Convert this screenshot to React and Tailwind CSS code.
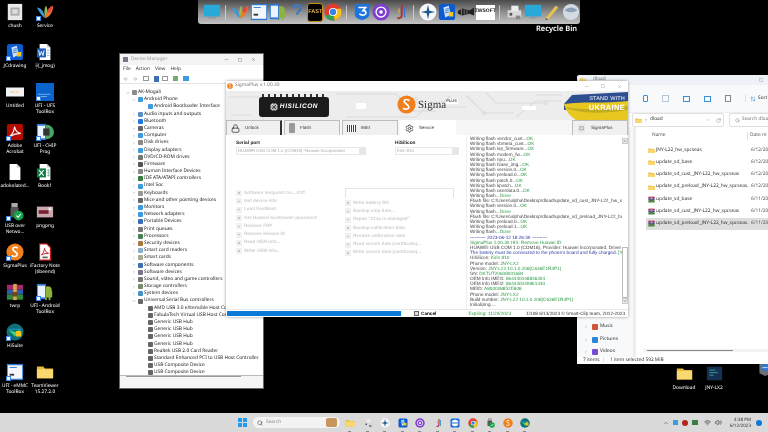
import React from "react";
import { ChevronRight, ChevronDown, ChevronUp, Search, RotateCw, ArrowUpDown, Wifi, Volume2, Minus, Square, X, Settings, Lock, Cpu, ArrowLeft, ArrowRight } from "lucide-react";

// --- small drawings, all on a 20x20 box ---
const Svg = ({ size = 18, children }) => (
  <svg width={size} height={size} viewBox="0 0 20 20" className="block shrink-0">{children}</svg>
);

const Page = ({ fill = "#fff" }) => <path d="M4 1h8l4 4v14H4z" fill={fill} />;

const icons = {
  chush: <><rect x="2" y="1" width="16" height="18" fill="#e8e8e4" /><rect x="5" y="5" width="10" height="9" fill="#aaa" /><rect x="7" y="7" width="6" height="5" fill="#ddd" /></>,
  msn: <><path d="M10 17C6 14 3 9 1 5c4 0 8 4 9 12z" fill="#3a9ad9" /><path d="M10 17C9 11 9 6 11 3c2 2 2 8-1 14z" fill="#8cc152" /><path d="M10 17c1-6 4-11 9-14 0 6-3 12-9 14z" fill="#f2752b" /><path d="M12 9c2-3 4-5 6-6 1 3-1 6-3 8z" fill="#e8483b" /></>,
  jcd: <><rect x="1" y="1" width="18" height="18" rx="3" fill="#0b5bd3" /><path d="M6 5l6-2 2 10-6 3z" fill="#cfe3fb" /><path d="M8 7l4-1M8 9l4-1M8 11l4-1" stroke="#0b5bd3" strokeWidth=".8" /><rect x="12" y="10" width="5" height="5" fill="#f5c518" /></>,
  word: <><Page /><path d="M12 1l4 4h-4z" fill="#ccc" /><rect x="1" y="6" width="10" height="10" fill="#1c5db5" /><path d="M3 8l1.2 6L6 9.5 7.8 14 9 8" stroke="#fff" strokeWidth="1" fill="none" /><path d="M12 8h3M12 11h3M12 14h3" stroke="#8fb0dd" strokeWidth="1" /></>,
  untitled: <><rect x="0" y="5" width="20" height="10" fill="#f3f3f3" /><path d="M7 10h1M9 10h1M11 10h1M13 10h1" stroke="#e0a030" strokeWidth="1" /><path d="M5 10h1" stroke="#4a90d9" strokeWidth="1" /></>,
  ufs: <><rect x="0" y="0" width="20" height="20" fill="#0b63ce" /><rect x="2" y="12" width="14" height="1" fill="#7fb1ea" /><rect x="2" y="14.5" width="10" height="1" fill="#7fb1ea" /></>,
  acrobat: <><rect x="1" y="1" width="18" height="18" rx="2" fill="#b30b00" /><path d="M4 15c3-2 5-6 5.500-11 1 5 3 7 7 7.500-4 0-8 1-12.500 3.500z" stroke="#fff" strokeWidth="1.200" fill="none" /></>,
  chip: <><circle cx="12" cy="10" r="8" fill="#4aa564" /><rect x="1" y="1" width="10" height="18" fill="#2f79d4" /><rect x="2" y="3" width="8" height="14" fill="#eaf2fb" /><rect x="8" y="6" width="7" height="8" fill="#333" /></>,
  blank: <><Page /><path d="M12 1l4 4h-4z" fill="#ccc" /></>,
  excel: <><Page /><path d="M12 1l4 4h-4z" fill="#ccc" /><rect x="1" y="6" width="10" height="10" fill="#107c41" /><path d="M3.500 8l5 6M8.500 8l-5 6" stroke="#fff" strokeWidth="1.200" /><path d="M12 8h3.500M12 11h3.500M12 14h3.500M14 7v8" stroke="#6fb58f" strokeWidth=".8" /></>,
  usb: <><rect x="6" y="0" width="7" height="5" fill="#aaa" /><rect x="5" y="5" width="9" height="11" fill="#555" /><circle cx="14" cy="14" r="5.500" fill="#15a34a" /><path d="M11.500 14l2 2 3-4" stroke="#fff" strokeWidth="1.200" fill="none" /></>,
  picture: <><rect x="1" y="4" width="18" height="12" fill="#c9a8ae" /><rect x="3" y="8" width="11" height="4" fill="#7a1f35" /><rect x="14" y="5" width="3" height="3" fill="#eee" /></>,
  sigma: <><circle cx="10" cy="10" r="9.500" fill="#f07f1e" /><path d="M13 6c-1-1.500-5-2-5.500.5C7 9 13 10 12.500 13c-.5 2.500-5 2.500-6 .5" stroke="#fff" strokeWidth="1.800" fill="none" /></>,
  pdf: <><path d="M4 1h8l4 4v14H4z" fill="#fff" stroke="#c4161c" strokeWidth="1.200" /><path d="M6 13c2-1 3-4 3.500-7 .5 3 2 5 4.500 5.500-3 0-5 .5-8 1.500z" stroke="#c4161c" fill="none" /><rect x="7" y="15" width="6" height="2" fill="#666" /></>,
  rar: <><rect x="1" y="2" width="18" height="5.500" fill="#a6296d" /><rect x="1" y="7.500" width="18" height="5.500" fill="#2f5aa8" /><rect x="1" y="13" width="18" height="5.500" fill="#2d8a3e" /><rect x="8" y="1" width="4" height="18" fill="#d8a545" /><rect x="7" y="10" width="6" height="5" fill="#6b4a1c" /></>,
  android: <><circle cx="13" cy="8" r="4.500" fill="#8db33a" /><rect x="8" y="9" width="10" height="7" rx="1" fill="#8db33a" /><rect x="10" y="15" width="2" height="4" fill="#8db33a" /><rect x="14" y="15" width="2" height="4" fill="#8db33a" /><rect x="1" y="1" width="10" height="17" fill="#2f79d4" /><rect x="2" y="3" width="8" height="13" fill="#eaf2fb" /></>,
  hisuite: <><circle cx="10" cy="10" r="9.500" fill="#0d6f77" /><path d="M3 8l7 7 7-9-6 4z" fill="#3fd07a" /><rect x="11" y="9" width="6" height="6" fill="#f5c518" /><path d="M3 7h14" stroke="#2a9bd4" /></>,
  emmc: <><rect x="1" y="1" width="18" height="18" fill="#2f79d4" /><rect x="2" y="2.500" width="16" height="15" fill="#f3f7fc" /><rect x="4" y="12" width="5" height="2" fill="#333" /><path d="M4 5h8" stroke="#2f79d4" /></>,
  folder: <><path d="M1 4h7l2 2h9v11H1z" fill="#e8b93c" /><path d="M1 7h18v10H1z" fill="#f9d86f" /></>,
  monitor: <><rect x="1" y="2" width="18" height="13" fill="#28a9d8" /><rect x="6" y="16" width="8" height="1" fill="#889" /></>,
  chrome: <><circle cx="10" cy="10" r="9.500" fill="#e33b2e" /><path d="M10 10L1.800 14.800A9.500 9.500 0 0 0 12 19.300z" fill="#2fa44f" /><path d="M10 10l2 9.300A9.500 9.500 0 0 0 18.800 6.500H10z" fill="#f8c11c" /><circle cx="10" cy="10" r="4.500" fill="#fff" /><circle cx="10" cy="10" r="3.500" fill="#3b82e6" /></>,
  three: <><path d="M2 1h16v12c0 3-4 5-8 6-4-1-8-3-8-6z" fill="#1d74dd" /><path d="M6 5h8l-3 3.500c3 0 4 1.500 3 3.500-1 2-5 2-7 0" stroke="#fff" strokeWidth="1.800" fill="none" /></>,
  purple: <><circle cx="10" cy="10" r="9.500" fill="#7d3fd1" /><circle cx="10" cy="10" r="5.500" fill="none" stroke="#fff" strokeWidth="1.500" /><circle cx="10" cy="10" r="2" fill="#fff" /></>,
  j: <><path d="M12 2v11c0 3-2 4-5 4" stroke="#b0353a" strokeWidth="2.200" fill="none" /><path d="M15 4v12" stroke="#2f79d4" strokeWidth="1.500" /><path d="M9 6v5" stroke="#d8a545" strokeWidth="1.500" /></>,
  compass: <><circle cx="10" cy="10" r="9.500" fill="#f7f7f7" /><path d="M10 2l1.500 6.500L18 10l-6.500 1.500L10 18l-1.500-6.500L2 10l6.500-1.500z" fill="#1f5a91" /></>,
  fish: <><path d="M1 9l5-3 8 2 5-3v9l-5-2-8 2-5-2z" fill="#222" /><path d="M5 6v7M8 7v6M11 7v6" stroke="#777" /></>,
  printer: <><rect x="3" y="8" width="15" height="8" fill="#d8d8d8" /><rect x="7" y="3" width="8" height="6" fill="#ececec" /><rect x="5" y="11" width="3" height="3" fill="#555" /><rect x="12" y="14" width="5" height="4" fill="#888" /></>,
  help: <path d="M6 6c0-5 8-5 8 0 0 3-4 3-4 7" stroke="#3a7ac8" strokeWidth="2.500" fill="none" />,
  team: <><rect x="1" y="1" width="18" height="18" rx="3" fill="#1e6fd9" /><circle cx="10" cy="10" r="6.500" fill="#fff" /><path d="M3 10h14" stroke="#1e6fd9" strokeWidth="2" /></>,
  pencil: <><path d="M3 17L14 3l3 2L6 18z" fill="#e8c34a" /><path d="M3 17l3 1-3 1z" fill="#444" /></>,
  ball: <><circle cx="10" cy="10" r="9" fill="#d5dbe3" /><path d="M3 8c4-4 10-4 14 0-4 3-10 3-14 0z" fill="#8ea0b7" /></>,
  dark: <><rect x="1" y="2" width="18" height="16" fill="#16304f" /><path d="M4 6h7M4 9h10M4 12h5" stroke="#3ea6a0" /></>,
  grey: <><path d="M2 1h18v16l-10 3-8-4z" fill="#6b6f73" /><circle cx="10" cy="8" r="5" fill="#2f79d4" /><path d="M6 8h8" stroke="#fff" /></>,
};

const Ico = ({ name, size = 18 }) => <Svg size={size}>{icons[name]}</Svg>;

// desktop, read by rows: [left column, right column]
const desktop = [
  [{ icon: "chush", label: "chush" }, { icon: "msn", label: "Service", link: true }],
  [{ icon: "jcd", label: "JCdrawing", link: true }, { icon: "word", label: "ဗို(_jmog)" }],
  [{ icon: "untitled", label: "Untitled" }, { icon: "ufs", label: "UFI - UFS ToolBox", link: true }],
  [{ icon: "acrobat", label: "Adobe Acrobat", link: true }, { icon: "chip", label: "UFI - CHIP Prog", link: true }],
  [{ icon: "blank", label: "adokolated..." }, { icon: "excel", label: "Book1" }],
  [{ icon: "usb", label: "USB over Netwo...", link: true }, { icon: "picture", label: "pngpng" }],
  [{ icon: "sigma", label: "SigmaPlus", link: true }, { icon: "pdf", label: "iFactory Note (tibeend)" }],
  [{ icon: "rar", label: "twrp" }, { icon: "android", label: "UFI - Android ToolBox", link: true }],
  [{ icon: "hisuite", label: "HiSuite", link: true }, null],
  [{ icon: "emmc", label: "UFI - eMMC ToolBox", link: true }, { icon: "folder", label: "TeamViewer 15.27.2.0" }],
];

const DesktopIcon = ({ icon, label, link }) => (
  <div className="flex flex-col items-center w-[30px]">
    <div className="relative">
      <Ico name={icon} size={18} />
      {link && <span className="absolute left-0 bottom-0 w-[5px] h-[5px] bg-white border border-[#3b82e6]" />}
    </div>
    <div className="mt-[2px] text-center text-white text-[4.800px] leading-[6px] w-[30px] font-['Noto_Sans',sans-serif]">{label}</div>
  </div>
);

const DesktopIcons = () => (
  <div className="absolute left-0 top-[3px] grid grid-cols-[30px_30px] auto-rows-[40px]">
    {desktop.flat().map((item, i) => (item ? <DesktopIcon key={i} {...item} /> : <div key={i} />))}
  </div>
);

const Sep = () => <span className="w-[4px] h-[15px] mx-[3px] rounded-full border-l border-[#d8d8d8] opacity-80" />;

const Dock = () => (
  <div className="absolute left-[198px] top-0 w-[382px] h-[24px] rounded-b-[3px] bg-gradient-to-b from-[#4a4a4a] via-[#8f8f8f] to-[#c4c4c4] flex items-center gap-[1px] pl-[5px]">
    <Ico name="monitor" />
    <Sep />
    <Ico name="msn" /><Ico name="emmc" /><Ico name="android" /><Ico name="help" />
    <div className="w-[19px] h-[19px] rounded-[3px] bg-black border border-[#c68a1a] flex items-center justify-center text-[#e9b949] text-[5.500px] font-bold font-['Liberation_Sans',sans-serif]">FAST</div>
    <Ico name="chrome" />
    <Sep />
    <Ico name="three" /><Ico name="purple" /><Ico name="j" />
    <Sep />
    <Ico name="compass" /><Ico name="jcd" /><Ico name="fish" />
    <div className="w-[19px] h-[15px] bg-white text-[#222] text-[5px] font-bold flex items-center justify-center font-['Liberation_Sans',sans-serif]">ZWSOFT</div>
    <Sep />
    <Ico name="printer" /><Ico name="monitor" /><Ico name="pencil" /><Ico name="ball" />
  </div>
);

// --- Device Manager ---
const tree = [
  ["#5a8fc7", "Audio inputs and outputs"], ["#1e78e0", "Bluetooth"], ["#666", "Cameras"], ["#3d9be0", "Computer"],
  ["#888", "Disk drives"], ["#3d9be0", "Display adapters"], ["#777", "DVD/CD-ROM drives"], ["#555", "Firmware"],
  ["#888", "Human Interface Devices"], ["#3a7d44", "IDE ATA/ATAPI controllers"], ["#3d9be0", "Intel Soc"], ["#999", "Keyboards"],
  ["#666", "Mice and other pointing devices"], ["#3d9be0", "Monitors"], ["#3d9be0", "Network adapters"], ["#3b6fb5", "Portable Devices"],
  ["#777", "Print queues"], ["#4b7f52", "Processors"], ["#a9783a", "Security devices"], ["#8ab0d0", "Smart card readers"],
  ["#aa9", "Smart cards"], ["#3b6fb5", "Software components"], ["#778", "Software devices"], ["#777", "Sound, video and game controllers"],
  ["#7a8a6a", "Storage controllers"], ["#4a90c8", "System devices"],
];

const usb = [
  "AMD USB 3.0 eXtensible Host Controller", "FabulaTech Virtual USB Host Controller", "Generic USB Hub", "Generic USB Hub", "Generic USB Hub",
  "Generic USB Hub", "Realtek USB 2.0 Card Reader", "Standard Enhanced PCI to USB Host Controller", "USB Composite Device", "USB Composite Device",
];

const Row = ({ color, label, open, arrow = true, depth = 1 }) => (
  <div className={`flex items-center h-[7.200px] whitespace-nowrap ${depth === 0 ? "pl-[0px]" : depth === 1 ? "pl-[6px]" : "pl-[20px]"}`}>
    {arrow ? (open ? <ChevronDown size={4} className="text-[#555] shrink-0" /> : <ChevronRight size={4} className="text-[#777] shrink-0" />) : null}
    <span className="w-[5px] h-[5px] mx-[1.500px] shrink-0 rounded-[1px]" style={{ backgroundColor: color }} />
    <span>{label}</span>
  </div>
);

const DeviceManager = () => (
  <div className="absolute left-[119px] top-[53px] w-[145px] h-[336px] bg-white flex flex-col border border-[#666] text-[#222] text-[4.800px] font-['Noto_Sans',sans-serif] overflow-hidden">
    <div className="flex items-center h-[11px] bg-[#f3f3f3] px-[3px] gap-[3px] text-[#999] shrink-0">
      <span className="w-[5px] h-[5px] bg-[#778]" />
      <span>Device Manager</span>
      <div className="ml-auto flex items-center gap-[9px] pr-[4px] text-[#666]"><Minus size={5} /><Square size={4} /><X size={5} /></div>
    </div>
    <div className="flex gap-[5px] h-[9px] items-center px-[3px] text-[#333] shrink-0">
      <span>File</span><span>Action</span><span>View</span><span>Help</span>
    </div>
    <div className="flex gap-[3px] h-[10px] items-center px-[3px] border-b border-[#e4e4e4] shrink-0">
      <ArrowLeft size={6} className="text-[#999]" /><ArrowRight size={6} className="text-[#999]" />
      <span className="w-[6px] h-[5px] border border-[#999] ml-[2px]" />
      <span className="w-[5px] h-[6px] bg-[#3b6fb5] ml-[2px]" />
      <span className="w-[6px] h-[5px] border border-[#999]" />
      <span className="w-[5px] h-[5px] bg-[#7aa86f] ml-[2px]" />
      <span className="w-[6px] h-[5px] bg-[#3d9be0] ml-[2px]" />
    </div>
    <div className="flex-1 overflow-hidden pt-[5px] pl-[6px]">
      <Row color="#8a8a8a" label="AK-Mogali" open depth={0} />
      <Row color="#3d9be0" label="Android Phone" open />
      <Row color="#3d9be0" label="Android Bootloader Interface" arrow={false} depth={2} />
      {tree.map(([color, label], i) => <Row key={i} color={color} label={label} />)}
      <Row color="#666" label="Universal Serial Bus controllers" open />
      {usb.map((label, i) => <Row key={i} color="#666" label={label} arrow={false} depth={2} />)}
    </div>
    <div className="h-[13px] bg-[#f5f5f5] border-t border-[#bbb] shrink-0 relative">
      <div className="absolute left-[6px] top-[0px] w-[115px] h-[1px] bg-[#999]" />
    </div>
  </div>
);

// --- SigmaPlus ---
const leftActions = ["Software testpoint On..../Off", "Get device info", "Load FastBoot", "Get Huawei bootloader password", "Remove FRP", "Remove Huawei ID", "Read OEM Info...", "Write OEM Info..."];
const rightActions = ["Write battery SN", "Backup chip data...", "Repair \"Chip is damaged\"", "Backup calibration data", "Restore calibration data", "Read secure data (certificate)...", "Write secure data (certificate)..."];

const g = "#2e9a45";
const log = [
  ["Writing flash vendor_cust...", "OK"], ["Writing flash vbmeta_cust...", "OK"], ["Writing flash isp_firmware...", "OK"], ["Writing flash modem_fw...", "OK"],
  ["Writing flash npu...", "OK"], ["Writing flash hiase_img...", "OK"], ["Writing flash version.0...", "OK"], ["Writing flash preload.0...", "OK"],
  ["Writing flash patch.0...", "OK"], ["Writing flash kpatch...", "OK"], ["Writing flash userdata.0...", "OK"], ["Writing flash...", "Done"],
  ["Flash file: C:\\Users\\alpha\\Desktop\\dload\\update_sd_cust_JNY-L22_hw_spcseas"], ["Writing flash version.0...", "OK"], ["Writing flash...", "Done"],
  ["Flash file: C:\\Users\\alpha\\Desktop\\dload\\update_sd_preload_JNY-L22_hw_spc"], ["Writing flash preload.0...", "OK"], ["Writing flash preload.1...", "OK"], ["Writing flash...", "Done"],
];
const logEnd = [
  ["HiSilicon: ", "Kirin 810"], ["Phone model: ", "JNY-LX2"], ["Version: ", "JNY-L22 10.1.0.208(C636E1R4P1)"], ["SN: ", "DKTUT20608001684"],
  ["OEM Info IMEI1: ", "864440048836304"], ["OEM Info IMEI2: ", "864440049861330"], ["MEID: ", "A800008852E808"], ["Phone model: ", "JNY-LX2"],
  ["Build number: ", "JNY-L22 10.1.0.208(C636E1R4P1)"], ["Initializing ..."],
];

const LogLine = ({ text, value }) => (
  <div className="h-[5.200px] leading-[5.200px] whitespace-nowrap text-[#444]">{text}{value && <span style={{ color: g }}>{value}</span>}</div>
);

const Tab = ({ icon, label, active, dark }) => (
  <div className={`flex items-center gap-[5px] pl-[4px] h-[15px] w-[56px] border-t border-l ${dark ? "border-r-2 border-r-[#333]" : "border-r"} ${active ? "bg-white border-white" : "bg-[#f0f0f0] border-[#bdbdbd]"}`}>
    {icon}
    <span className="text-[4.500px] font-['Liberation_Sans',sans-serif] text-[#333]">{label}</span>
  </div>
);

const Action = ({ label }) => (
  <div className="flex items-center gap-[2px] h-[8.300px]">
    <span className="w-[6px] h-[6px] bg-[#f0f0f0] flex items-center justify-center shrink-0"><span className="w-[1.500px] h-[1.500px] rounded-full bg-[#bbb]" /></span>
    <span className="text-[#cfcfcf] text-[4.600px] font-bold font-['Liberation_Sans',sans-serif] whitespace-nowrap">{label}</span>
  </div>
);

const Combo = ({ label, value, width }) => (
  <div style={{ width }}>
    <div className="text-[4.800px] leading-[6px] font-bold text-[#222] font-['Liberation_Sans',sans-serif]">{label}</div>
    <div className="flex items-center justify-between h-[8px] border border-[#e8e8e8] pl-[1px] text-[4.300px] text-[#aaa] font-['Liberation_Sans',sans-serif] whitespace-nowrap overflow-hidden">
      <span>{value}</span>
      <span className="w-[6px] h-full bg-[#e6e6e6] shrink-0" />
    </div>
  </div>
);

const Banner = () => (
  <div className="relative h-[29px] bg-[#ededed] overflow-hidden shrink-0">
    <svg className="absolute inset-0" width="402" height="29" viewBox="0 0 402 29">
      <g stroke="#dcdcdc" strokeWidth="1.200" fill="none">
        <path d="M2 6h30l5 5v18M110 3h60l8 8h40l6-6M120 26h70l10-10h40M240 4l18 18h30M260 2l10 10h50M290 26l20-16h26M5 24h20M310 4h26M180 20h30" />
        <circle cx="258" cy="22" r="1.500" /><circle cx="320" cy="12" r="1.500" /><circle cx="190" cy="8" r="1.500" />
      </g>
      <g fill="#fff"><rect x="220" y="8" width="12" height="5" /><rect x="296" y="15" width="14" height="4" /><rect x="130" y="12" width="10" height="6" /></g>
    </svg>
    {/* chip logo */}
    <div className="absolute left-[33px] top-[6px] w-[70px] h-[20px] rounded-[3px] bg-[#1b1b1b] flex items-center justify-center gap-[2px]">
      <Cpu size={8} className="text-white" />
      <span className="text-white italic font-bold text-[6.500px] tracking-[0.6px] font-['Liberation_Sans',sans-serif]">HISILICON</span>
    </div>
    <div className="absolute left-[36px] top-[3px] w-[64px] h-[3px] bg-[repeating-linear-gradient(90deg,#333_0,#333_2px,transparent_2px,transparent_6px)]" />
    {/* sigma logo */}
    <div className="absolute left-[171px] top-[4px] flex items-start">
      <Ico name="sigma" size={19} />
      <span className="ml-[2px] mt-[4px] text-[#333] text-[11px] leading-[12px] font-['Liberation_Serif',serif]">Sigma</span>
      <span className="mt-[3px] text-[#555] text-[4px] font-bold font-['Liberation_Sans',sans-serif]">PLUS</span>
    </div>
    {/* flag */}
    <svg className="absolute right-0 top-[1px]" width="64" height="28" viewBox="0 0 64 28">
      <path d="M8 3L64 0v14L0 18V12z" fill="#2d4f8f" />
      <path d="M0 12c20-3 40 0 64-3v19H12c-6-4-10-8-12-16z" fill="#e8c820" />
      <path d="M0 15c15 2 30 4 64-1v4c-25 4-50 4-64-3z" fill="#a89a20" opacity=".6" />
    </svg>
    <div className="absolute right-[3px] top-[5px] text-right text-white font-['Liberation_Sans',sans-serif]">
      <div className="text-[5.500px] leading-[7px] tracking-[0.2px]">STAND WITH</div>
      <div className="text-[7.500px] leading-[9px] font-bold tracking-[0.3px]">UKRAINE</div>
    </div>
  </div>
);

const SigmaWindow = () => (
  <div className="absolute left-[226px] top-[81px] w-[402px] h-[236px] bg-white flex flex-col shadow-[0_0_3px_rgba(0,0,0,0.4)]">
    <div className="flex items-center h-[10px] px-[1px] gap-[2px] shrink-0 text-[#777] text-[4.800px] font-['Noto_Sans',sans-serif]">
      <Ico name="sigma" size={6} />
      <span>SigmaPlus v.1.00.30</span>
      <div className="ml-auto flex items-center gap-[12px] pr-[5px] text-[#999]"><Minus size={5} /><Square size={4} /><X size={5} /></div>
    </div>
    <Banner />
    <div className="flex items-end gap-[2px] h-[15px] bg-[#f6f6f6] shrink-0">
      <Tab label="Unlock" dark icon={<Lock size={9} className="text-[#333]" />} />
      <Tab label="Flash" icon={<span className="w-[6px] h-[10px] rounded-[1px] bg-[#999]" />} />
      <Tab label="IMEI" icon={<span className="w-[9px] h-[7px] bg-[repeating-linear-gradient(90deg,#444_0,#444_1px,#fff_1px,#fff_2px)]" />} />
      <Tab label="Service" active icon={<Settings size={9} className="text-[#333]" />} />
      <div className="ml-auto">
        <Tab label="SigmaPlus" icon={<Ico name="chush" size={9} />} />
      </div>
    </div>
    <div className="flex flex-1 min-h-0">
      <div className="w-[240px] shrink-0 pl-[10px] pt-[6px]">
        <div className="flex gap-[29px]">
          <Combo label="Serial port" value={'HUAWEI USB COM 1.0 (COM18) "Huawei Incorporated'} width={130} />
          <Combo label="HiSilicon" value="Kirin 810" width={64} />
        </div>
        <div className="flex gap-[18px] mt-[25px]">
          <div className="w-[91px] pt-[9px]">
            {leftActions.map((label) => <Action key={label} label={label} />)}
          </div>
          <div className="w-[109px] pt-[8px]">
            <div className="h-[10px] border-x border-t border-[#e4e4e4] mb-[1px]" />
            {rightActions.map((label) => <Action key={label} label={label} />)}
          </div>
        </div>
      </div>
      <div className="flex-1 min-w-0 flex border-l border-[#eee] overflow-hidden">
        <div className="flex-1 min-w-0 overflow-hidden pl-[3px] pt-[1px] text-[4.700px] font-['Liberation_Sans',sans-serif]">
          {log.map(([text, value], i) => <LogLine key={i} text={text} value={value} />)}
          <div className="h-[5.200px] leading-[5.200px] whitespace-nowrap text-[#2b3aa0]">---------- 2023-06-12 18:26:39 ----------</div>
          <div className="h-[5.200px] leading-[5.200px] whitespace-nowrap" style={{ color: g }}>SigmaPlus 1.00.30 HIS: Remove Huawei ID</div>
          <LogLine text="HUAWEI USB COM 1.0 (COM18), Provider: Huawei Incorporated, Driver ver.:" />
          <div className="h-[5.200px] leading-[5.200px] whitespace-nowrap text-[#2b3aa0]">The battery must be connected to the phone's board and fully charged. <span style={{ color: g }}>[YES]</span></div>
          {logEnd.map(([text, value], i) => <LogLine key={i} text={text} value={value} />)}
        </div>
        <div className="w-[6px] shrink-0 flex flex-col items-center bg-white pt-[3px] pb-[5px]">
          <div className="w-[6px] h-[6px] bg-[#e8e8e8] border border-[#ccc] flex items-center justify-center"><ChevronUp size={4} className="text-black" /></div>
          <div className="flex-1" />
          <div className="w-[6px] h-[51px] border border-[#bbb] bg-white" />
          <div className="w-[6px] h-[6px] bg-[#e8e8e8] border border-[#ccc] flex items-center justify-center"><ChevronDown size={4} className="text-black" /></div>
        </div>
      </div>
    </div>
    <div className="flex items-center h-[8px] shrink-0 text-[4.700px] font-['Liberation_Sans',sans-serif] border-t border-[#e8e8e8]">
      <div className="w-[175px] h-[5px] ml-[1px] bg-[#eee]"><div className="h-full w-[174px] bg-[#0a7ad6]" /></div>
      <span className="ml-[12px] w-[5px] h-[5px] border border-[#666] bg-[#ddd]" />
      <span className="ml-[2px] text-black font-bold">Cancel</span>
      <span className="ml-[32px] text-[#2e9a45]">Expiring: 11/29/2023</span>
      <span className="ml-auto pr-[3px] text-[#333]">1/108 6/13/2023 © Smart-Clip team, 2012-2023</span>
    </div>
  </div>
);

// --- Explorer ---
const files = [
  ["folder", "JNY-L22_hw_spcseas", "6/12/2023"], ["folder", "update_sd_base", "6/12/2023"], ["folder", "update_sd_cust_JNY-L22_hw_spcseas", "6/12/2023"],
  ["folder", "update_sd_preload_JNY-L22_hw_spcseas...", "6/12/2023"], ["rar", "update_sd_base", "6/11/2023"], ["rar", "update_sd_cust_JNY-L22_hw_spcseas", "6/11/2023"],
  ["rar", "update_sd_preload_JNY-L22_hw_spcseas...", "6/11/2023"],
];

const navItems = [["#d0553c", "Music"], ["#2b85d6", "Pictures"], ["#7a4bd0", "Videos"]];

const Explorer = () => (
  <div className="absolute left-[577px] top-[75px] w-[191px] h-[289px] bg-white rounded-tl-[3px] flex flex-col text-[#333] text-[4.800px] font-['Noto_Sans',sans-serif] overflow-hidden">
    <div className="flex items-center h-[10px] bg-[#eef2f7] pl-[3px] gap-[2px] shrink-0 text-[#777]">
      <Ico name="folder" size={6} /><span className="ml-[5px]">dload</span>
      <Square size={4} className="ml-auto mr-[5px] text-[#888]" />
    </div>
    <div className="flex items-center h-[28px] bg-[#f8f9fb] pl-[66px] gap-[14px] shrink-0 text-[#4a7fb5] border-b border-[#eee]">
      <span className="w-[5px] h-[7px] rounded-[1px] border border-[#3b8fd6]" />
      <span className="w-[7px] h-[7px] border border-[#b4c6d8]" />
      <span className="w-[7px] h-[6px] border border-[#3b8fd6]" />
      <span className="w-[7px] h-[6px] border border-[#3b8fd6]" />
      <span className="w-[6px] h-[7px] border border-[#888]" />
      <span className="flex items-center gap-[2px] border-l border-[#ddd] pl-[4px] text-[#333]"><ArrowUpDown size={6} className="text-[#3b8fd6]" />Sort</span>
    </div>
    <div className="flex items-center gap-[5px] h-[14px] pl-[55px] shrink-0">
      <div className="flex items-center w-[92px] h-full border border-[#e0e0e0] rounded-[2px] px-[2px] gap-[2px]">
        <Ico name="folder" size={7} /><ChevronRight size={4} /><span>dload</span>
        <ChevronDown size={4} className="ml-auto text-[#777]" /><RotateCw size={5} className="ml-[4px] text-[#777]" />
      </div>
      <div className="flex flex-1 items-center h-full border border-[#e0e0e0] border-r-0 rounded-l-[2px] pl-[5px] gap-[2px] text-[#777] whitespace-nowrap overflow-hidden"><Search size={5} className="shrink-0" /><span>Search dload</span></div>
    </div>
    <div className="flex flex-1 min-h-0">
      <div className="w-[59px] bg-[#f8f9fb] shrink-0 flex flex-col justify-end pl-[7px] pb-[1.500px] gap-[5.500px] border-r-[3px] border-[#eee]">
        {navItems.map(([color, label]) => (
          <div key={label} className="flex items-center gap-[2px] h-[7px]">
            <ChevronRight size={4} className="text-[#777]" />
            <span className="w-[6px] h-[6px] ml-[2px] rounded-[1px]" style={{ backgroundColor: color }} />
            <span>{label}</span>
          </div>
        ))}
      </div>
      <div className="flex-1 min-w-0 flex flex-col pt-[5px] pl-[10px] overflow-hidden">
        <div className="flex h-[8px] items-center shrink-0 text-[#555] whitespace-nowrap">
          <span className="w-[102px] pl-[6px] shrink-0 border-r border-[#ddd]">Name</span>
          <span className="pl-[2px]">Date m</span>
        </div>
        <div className="mt-[4px]">
          {files.map(([icon, name, date], i) => (
            <div key={i} className={`flex items-center h-[12.300px] whitespace-nowrap ${i === 6 ? "bg-[#dedede]" : ""}`}>
              <span className="ml-[2px] shrink-0"><Ico name={icon} size={7} /></span>
              <span className="w-[94px] pl-[1px] shrink-0 overflow-hidden">{name}</span>
              <span className="ml-[2px] text-[#555]">{date}</span>
            </div>
          ))}
        </div>
        <div className="mt-auto mb-[5px] ml-[-3px] h-[3px] flex items-center bg-[#f2f2f2]"><div className="w-[86px] h-[1px] bg-[#888] ml-[4px]" /></div>
      </div>
    </div>
    <div className="flex items-center h-[7px] pl-[6px] gap-[3px] shrink-0 whitespace-nowrap">
      <span>7 items</span><span className="text-[#bbb]">|</span><span className="ml-[2px]">1 item selected 592 MiB</span>
    </div>
  </div>
);

// --- Taskbar ---
const taskIcons = ["folder", "printer", "compass", "jcd", "purple", "j", "team", "chrome", "usb", "sigma", "hisuite"];

const Taskbar = () => (
  <div className="flex items-center h-[19px] bg-[#dadada] pl-[238px] shrink-0 text-[#333] text-[4.800px] font-['Noto_Sans',sans-serif]">
    <div className="grid grid-cols-2 gap-[0.500px] w-[9px] h-[9px] shrink-0">
      <span className="bg-[#1f9bf0]" /><span className="bg-[#1f9bf0]" /><span className="bg-[#1f9bf0]" /><span className="bg-[#1f9bf0]" />
    </div>
    <div className="flex items-center w-[87px] h-[11px] ml-[6px] rounded-full bg-[#f3f3f3] pl-[4px] gap-[3px] text-[#888] shrink-0">
      <Search size={6} className="text-[#333]" /><span>Search</span>
      <span className="ml-auto mr-[3px] w-[11px] h-[9px] rounded-[2px] bg-[#c79560]" />
    </div>
    <div className="flex items-center ml-[5px] gap-[7.500px] shrink-0">
      {taskIcons.map((name, i) => (
        <div key={i} className="relative"><Ico name={name} size={10} /><span className="absolute left-[3px] bottom-[-4px] w-[3px] h-[1px] bg-[#888]" /></div>
      ))}
    </div>
    <div className="ml-auto flex items-center gap-[4px] pr-[6px]">
      <ChevronUp size={6} />
      <span className="w-[5px] h-[5px] bg-[#3d9be0]" />
      <span className="w-[6px] h-[6px] rounded-full bg-[#b3261e]" />
      <span className="w-[6px] h-[5px] bg-[#3a7d44]" />
      <Wifi size={7} className="ml-[2px]" /><Volume2 size={7} />
      <div className="ml-[3px] text-right leading-[6px] w-[22px] text-[4.500px]"><div>4:38 PM</div><div>6/12/2023</div></div>
      <span className="w-[6px] h-[6px] rounded-full bg-[#0a7ad6] ml-[1px]" />
    </div>
  </div>
);

const App = () => (
  <div className="w-[768px] h-[432px] bg-black overflow-hidden flex flex-col [text-rendering:geometricPrecision] blur-[0.35px]">
    <div className="relative flex-1">
      <DesktopIcons />
      <Dock />
      <div className="absolute left-[536px] top-[24px] text-white font-semibold text-[7.500px] font-['Noto_Sans',sans-serif]">Recycle Bin</div>
      <div className="absolute left-[669px] top-[365px] w-[30px] flex flex-col items-center text-white text-[4.800px] font-['Noto_Sans',sans-serif]">
        <Ico name="folder" size={17} /><span className="mt-[3px]">Download</span>
      </div>
      <div className="absolute left-[699px] top-[365px] w-[30px] flex flex-col items-center text-white text-[4.800px] font-['Noto_Sans',sans-serif]">
        <Ico name="dark" size={17} /><span className="mt-[3px]">JNY-LX2</span>
      </div>
      <div className="absolute left-[758px] top-[362px]"><Ico name="grey" size={14} /></div>
      <DeviceManager />
      <Explorer />
      <SigmaWindow />
    </div>
    <Taskbar />
  </div>
);

export default App;
